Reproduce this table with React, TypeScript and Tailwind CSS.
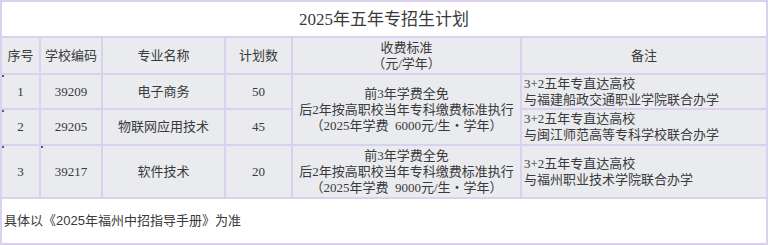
import React from "react";

const serif = { fontFamily: '"Liberation Serif", "Noto Sans CJK SC", serif' };
const sans = { fontFamily: '"Liberation Sans", "Noto Sans CJK SC", sans-serif' };

function Mark() {
  return <span className="absolute left-0 top-0 h-[2px] w-[2px] bg-[#2e7d32]" />;
}

const td = "border-2 border-[#dcd0f0] bg-[#e9ebee] text-center align-middle p-0";

export default function App() {
  return (
    <div className="w-[768px] h-[245px] bg-white text-[#3a3a3a] text-[13px] leading-[16px]" style={serif}>
      <table className="w-[768px] table-fixed border-collapse">
        <colgroup>
          <col className="w-[39px]" />
          <col className="w-[62px]" />
          <col className="w-[123px]" />
          <col className="w-[67px]" />
          <col className="w-[229px]" />
          <col className="w-[246px]" />
        </colgroup>
        <tbody>
          <tr className="h-[36px]">
            <td colSpan={6} className="border-2 border-[#dcd0f0] bg-white text-center align-middle p-0 text-[17px] pt-[2px]">
              2025年五年专招生计划
            </td>
          </tr>
          <tr className="h-[37px]">
            <td className={td}>序号</td>
            <td className={td}>学校编码</td>
            <td className={td}>专业名称</td>
            <td className={td}>计划数</td>
            <td className={td}>
              <div>收费标准</div>
              <div>（元/学年）</div>
            </td>
            <td className={td}>备注</td>
          </tr>
          <tr className="h-[35px]">
            <td className={td + " relative"}><Mark />1</td>
            <td className={td}>39209</td>
            <td className={td}>电子商务</td>
            <td className={td}>50</td>
            <td rowSpan={2} className={td}>
              <div>前3年学费全免</div>
              <div>后2年按高职校当年专科缴费标准执行</div>
              <div>（2025年学费{"\u00a0\u00a0"}6000元/生・学年）</div>
            </td>
            <td className={td + " text-left pl-[2px]"}>
              <div>3+2五年专直达高校</div>
              <div>与福建船政交通职业学院联合办学</div>
            </td>
          </tr>
          <tr className="h-[36px]">
            <td className={td + " relative"}><Mark />2</td>
            <td className={td}>29205</td>
            <td className={td}>物联网应用技术</td>
            <td className={td}>45</td>
            <td className={td + " text-left pl-[2px]"}>
              <div>3+2五年专直达高校</div>
              <div>与闽江师范高等专科学校联合办学</div>
            </td>
          </tr>
          <tr className="h-[53px]">
            <td className={td + " relative"}><Mark />3</td>
            <td className={td + " relative"}><Mark />39217</td>
            <td className={td}>软件技术</td>
            <td className={td}>20</td>
            <td className={td}>
              <div>前3年学费全免</div>
              <div>后2年按高职校当年专科缴费标准执行</div>
              <div>（2025年学费{"\u00a0\u00a0"}9000元/生・学年）</div>
            </td>
            <td className={td + " text-left pl-[2px]"}>
              <div>3+2五年专直达高校</div>
              <div>与福州职业技术学院联合办学</div>
            </td>
          </tr>
          <tr className="h-[46px]">
            <td colSpan={6} className="border-2 border-[#dcd0f0] bg-white text-left align-middle p-0 pl-[2px]" style={sans}>
              具体以《2025年福州中招指导手册》为准
            </td>
          </tr>
        </tbody>
      </table>
    </div>
  );
}
